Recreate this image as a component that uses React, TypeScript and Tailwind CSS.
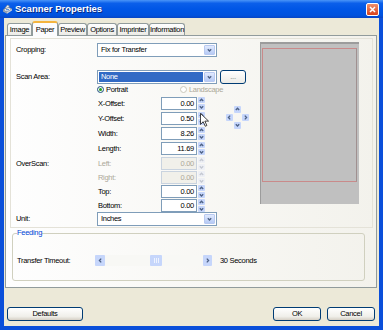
import React from "react";

function Chevron({ dir, color = "#4D6185" }: { dir: "up" | "down" | "left" | "right"; color?: string }) {
  const d =
    dir === "up"
      ? "M0.8 3 L2.5 1.2 L4.2 3"
      : dir === "down"
      ? "M0.8 1.2 L2.5 3 L4.2 1.2"
      : dir === "left"
      ? "M3.2 0.6 L1.4 2.5 L3.2 4.4"
      : "M1.8 0.6 L3.6 2.5 L1.8 4.4";
  return (
    <svg width="5" height="5" viewBox="0 0 5 5" className="block">
      <path d={d} stroke={color} strokeWidth="1.3" fill="none" />
    </svg>
  );
}

function DropArrow() {
  return (
    <div className="w-[11px] h-full border border-[#B8C9F0] rounded-[1px] bg-[linear-gradient(to_bottom,#E1EAFE,#B6CAF5)] flex items-center justify-center">
      <Chevron dir="down" />
    </div>
  );
}

function Dropdown({ text, selected }: { text: string; selected?: boolean }) {
  return (
    <div className="h-[14px] w-[120px] border border-[#7F9DB9] bg-white flex p-[1px]">
      <div
        className={
          selected
            ? "flex-1 h-full flex items-center pl-[2px] bg-[#316AC5] text-white mr-[1px]"
            : "flex-1 h-full flex items-center pl-[2px]"
        }
      >
        {text}
      </div>
      <DropArrow />
    </div>
  );
}

function Spin({ disabled }: { disabled?: boolean }) {
  return (
    <div className="w-[7px] h-[13px] ml-[1px] flex flex-col gap-[1px]">
      <div
        className={
          disabled
            ? "flex-1 rounded-[1px] bg-[#EEF0F5] flex items-center justify-center"
            : "flex-1 rounded-[1px] bg-[#C6D6FB] flex items-center justify-center"
        }
      >
        <Chevron dir="up" color={disabled ? "#C4C8D2" : "#4D6185"} />
      </div>
      <div
        className={
          disabled
            ? "flex-1 rounded-[1px] bg-[#EEF0F5] flex items-center justify-center"
            : "flex-1 rounded-[1px] bg-[#C6D6FB] flex items-center justify-center"
        }
      >
        <Chevron dir="down" color={disabled ? "#C4C8D2" : "#4D6185"} />
      </div>
    </div>
  );
}

function NumRow({
  label,
  sub,
  value,
  disabled,
  cursor,
}: {
  label?: string;
  sub: string;
  value: string;
  disabled?: boolean;
  cursor?: boolean;
}) {
  return (
    <div className="relative flex items-center h-[13px]">
      <div className="w-[81px]">{label}</div>
      <div className={disabled ? "w-[64px] pl-[1px] text-[#ACA899]" : "w-[64px] pl-[1px]"}>{sub}</div>
      <div
        className={
          disabled
            ? "w-[36px] h-[13px] border border-[#C9D3DF] bg-[#F1F0EA] text-[#ACA899] flex items-center justify-end pr-[2px]"
            : "w-[36px] h-[13px] border border-[#7F9DB9] bg-white flex items-center justify-end pr-[2px]"
        }
      >
        {value}
      </div>
      <Spin disabled={disabled} />
      {cursor && (
        <svg
          width="9"
          height="14"
          viewBox="0 0 12 19"
          className="absolute left-[184px] top-[1px] z-20"
        >
          <path
            d="M0.5 0.5 L0.5 15.5 L4.2 11.8 L7 18 L9.2 17 L6.5 11 L11.5 11 Z"
            fill="#fff"
            stroke="#000"
            strokeWidth="1"
          />
        </svg>
      )}
    </div>
  );
}

function PadBtn({ dir }: { dir: "up" | "down" | "left" | "right" }) {
  return (
    <div className="w-[7px] h-[7px] rounded-[1px] bg-[#C6D6FB] flex items-center justify-center">
      <Chevron dir={dir} />
    </div>
  );
}

function XPButton({ children, w }: { children: React.ReactNode; w: string }) {
  return (
    <div
      className={`${w} h-[14px] border border-[#003C74] rounded-[3px] bg-[linear-gradient(to_bottom,#FFFFFF,#F0EFEA_70%,#D6D0C5)] flex items-center justify-center`}
    >
      {children}
    </div>
  );
}

export default function App() {
  const tabs = [
    { t: "Image", w: "w-[25px]" },
    { t: "Paper", w: "w-[26px]", sel: true },
    { t: "Preview", w: "w-[29px]" },
    { t: "Options", w: "w-[30px]" },
    { t: "Imprinter", w: "w-[32px]" },
    { t: "Information", w: "w-[36px]" },
  ];
  return (
    <div className="w-[383px] h-[330px] flex flex-col bg-[#0A4FDA] font-['Liberation_Sans',Arial,sans-serif] text-[7.5px] tracking-[-0.3px] text-black leading-none overflow-hidden select-none">
      {/* Title bar */}
      <div className="h-[18px] flex items-center px-[2px] bg-[linear-gradient(to_bottom,#4A95F8_0%,#0B5FEA_18%,#0056E6_50%,#0052DE_85%,#0846C4_100%)]">
        <svg width="11" height="11" viewBox="0 0 11 11" className="block">
          <path d="M1 6 L6 3 L10 5 L5 8 Z" fill="#E8E8E8" stroke="#6B7A8C" strokeWidth="0.7" />
          <path d="M1 6 L1 7.5 L5 9.8 L5 8 Z" fill="#9AA6B4" />
          <path d="M5 8 L10 5 L10 6.5 L5 9.8 Z" fill="#C7CED8" />
          <path d="M2.5 4.5 L5.5 1 L7.5 2 L6 3.8 Z" fill="#F4F4F4" stroke="#6B7A8C" strokeWidth="0.6" />
          <rect x="4" y="5.2" width="3" height="1" fill="#3A7BD5" />
        </svg>
        <div className="ml-[2px] text-white font-bold text-[9.5px] tracking-normal [text-shadow:1px_1px_0_#0A2A80]">
          Scanner Properties
        </div>
        <div className="ml-auto mr-[2px] w-[13px] h-[13px] rounded-[2px] border border-white bg-[linear-gradient(to_bottom,#F0906C,#D8431C)] flex items-center justify-center">
          <svg width="7" height="7" viewBox="0 0 7 7" className="block">
            <path d="M1 1 L6 6 M6 1 L1 6" stroke="#fff" strokeWidth="1.5" />
          </svg>
        </div>
      </div>

      {/* Body */}
      <div className="flex-1 mx-[4px] mb-[4px] bg-[#ECE9D8] flex flex-col">
        {/* Tabs */}
        <div className="relative z-10 h-[17px] flex items-end pl-[3px]">
          {tabs.map((tab) =>
            tab.sel ? (
              <div
                key={tab.t}
                className={`${tab.w} h-[15px] -mb-[1px] bg-[#FCFCFE] border-x border-[#919B9C] border-t-[2px] border-t-[#F4B43E] rounded-t-[3px] flex items-center justify-center`}
              >
                {tab.t}
              </div>
            ) : (
              <div
                key={tab.t}
                className={`${tab.w} h-[12px] border border-b-0 border-[#919B9C] rounded-t-[3px] bg-[linear-gradient(to_bottom,#FFFFFF,#ECEBE6)] flex items-center justify-center whitespace-nowrap`}
              >
                {tab.t}
              </div>
            )
          )}
        </div>

        {/* Tab panel */}
        <div className="h-[253px] ml-[1px] mr-[2px] border border-[#919B9C] bg-[linear-gradient(to_right,#FEFEFE,#F3F2EC)] flex flex-col">
          <div className="mt-[2px] ml-[4px] mr-[3px] h-[190px] border border-[#E4E2D8] flex">
            {/* Form */}
            <div className="flex flex-col pl-[5px] pt-[4px]">
              <div className="flex items-center h-[14px]">
                <div className="w-[81px]">Cropping:</div>
                <Dropdown text="Fix for Transfer" />
              </div>
              <div className="flex items-center h-[14px] mt-[13px]">
                <div className="w-[81px]">Scan Area:</div>
                <Dropdown text="None" selected />
                <div className="ml-[3px] w-[26px] h-[14px] border border-[#003C74] rounded-[3px] bg-[linear-gradient(to_bottom,#FFFFFF,#ECEBE6)] flex items-center justify-center text-[#777]">
                  ...
                </div>
              </div>
              <div className="flex items-center h-[11px] ml-[81px]">
                <div className="w-[83px] flex items-center">
                  <div className="w-[7px] h-[7px] rounded-full border border-[#1C5180] bg-[#F4F4F0] flex items-center justify-center">
                    <div className="w-[3px] h-[3px] rounded-full bg-[#21A121]" />
                  </div>
                  <span className="ml-[2px]">Portrait</span>
                </div>
                <div className="flex items-center text-[#ACA899]">
                  <div className="w-[7px] h-[7px] rounded-full border border-[#CAC8BB] bg-white" />
                  <span className="ml-[2px]">Landscape</span>
                </div>
              </div>
              <div className="flex items-start mt-[2px]">
                <div className="flex flex-col gap-[2px]">
                  <NumRow sub="X-Offset:" value="0.00" />
                  <NumRow sub="Y-Offset:" value="0.50" cursor />
                  <NumRow sub="Width:" value="8.26" />
                  <NumRow sub="Length:" value="11.69" />
                </div>
                <div className="ml-[21px] mt-[9px] grid grid-cols-[7px_7px_7px] grid-rows-[7px_7px_7px] gap-[1px]">
                  <div />
                  <PadBtn dir="up" />
                  <div />
                  <PadBtn dir="left" />
                  <div />
                  <PadBtn dir="right" />
                  <div />
                  <PadBtn dir="down" />
                  <div />
                </div>
              </div>
              <div className="mt-[2px]">
                <NumRow label="OverScan:" sub="Left:" value="0.00" disabled />
              </div>
              <div className="mt-[1px]">
                <NumRow sub="Right:" value="0.00" disabled />
              </div>
              <div className="mt-[1px]">
                <NumRow sub="Top:" value="0.00" />
              </div>
              <div className="mt-[1px]">
                <NumRow sub="Bottom:" value="0.00" />
              </div>
              <div className="flex items-center h-[14px]">
                <div className="w-[81px]">Unit:</div>
                <Dropdown text="Inches" />
              </div>
            </div>
            {/* Preview */}
            <div className="ml-auto mt-[3px] mr-[13px] w-[99px] h-[162px] bg-[#C0C0C0] border-l border-t-[2px] border-[#9C9C9C]">
              <div className="mt-[4px] ml-[1px] w-[95px] h-[134px] border border-[#C98A8A] border-r-[#A09090]" />
            </div>
          </div>

          {/* Feeding */}
          <fieldset className="ml-[6px] mr-[11px] border border-[#D0D0BF] rounded-[3px] px-[4px] pb-[14px]">
            <legend className="text-[#0046D5] leading-[10px]">Feeding</legend>
            <div className="mt-[17px] flex items-center h-[11px]">
              <div className="w-[78px]">Transfer Timeout:</div>
              <div className="w-[117px] h-[11px] flex bg-[#F8F8F5]">
                <div className="w-[10px] h-full rounded-[1px] bg-[#C6D6FB] flex items-center justify-center">
                  <Chevron dir="left" />
                </div>
                <div className="w-[45px]" />
                <div className="w-[12px] h-full rounded-[1px] bg-[#C6D6FB] flex items-center justify-center gap-[1px]">
                  <div className="w-[1px] h-[5px] bg-[#EEF3FF]" />
                  <div className="w-[1px] h-[5px] bg-[#EEF3FF]" />
                  <div className="w-[1px] h-[5px] bg-[#EEF3FF]" />
                </div>
                <div className="flex-1" />
                <div className="w-[9px] h-full rounded-[1px] bg-[#C6D6FB] flex items-center justify-center">
                  <Chevron dir="right" />
                </div>
              </div>
              <div className="ml-[8px]">30 Seconds</div>
            </div>
          </fieldset>
        </div>

        {/* Buttons */}
        <div className="mt-[19px] flex items-center pl-[3px] pr-[4px]">
          <XPButton w="w-[76px]">Defaults</XPButton>
          <div className="ml-auto flex gap-[6px]">
            <XPButton w="w-[48px]">OK</XPButton>
            <XPButton w="w-[48px]">Cancel</XPButton>
          </div>
        </div>
      </div>
    </div>
  );
}
